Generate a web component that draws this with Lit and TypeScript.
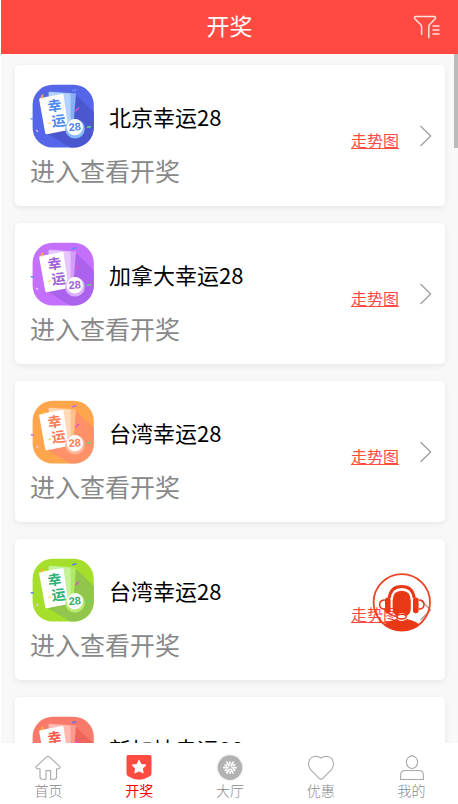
import { LitElement, html, css, svg } from "lit";
import { customElement, property } from "lit/decorators.js";

interface Palette {
  base: string;
  shade: string;
  sheet: string;
  back: string;
  ink: string;
  ring: string;
  spark: string;
}

interface Lottery {
  name: string;
  palette: Palette;
}

const LOTTERIES: Lottery[] = [
  { name: "北京幸运28", palette: { base: "#5566e8", shade: "#4b57cf", sheet: "#b4d2ff", back: "#86aefa", ink: "#4a88f2", ring: "#86b9fb", spark: "#6a8cf5" } },
  { name: "加拿大幸运28", palette: { base: "#c56fff", shade: "#ab63ee", sheet: "#e6c6ff", back: "#d79bff", ink: "#a05fd6", ring: "#dcb2ff", spark: "#4f8df5" } },
  { name: "台湾幸运28", palette: { base: "#ffa64c", shade: "#ff9169", sheet: "#ffd9b8", back: "#ffc08c", ink: "#fb7d58", ring: "#ffb795", spark: "#c06cf0" } },
  { name: "台湾幸运28", palette: { base: "#a6df2b", shade: "#90c64b", sheet: "#c3f29a", back: "#b0ea62", ink: "#2bb277", ring: "#b9ea70", spark: "#5b7bf0" } },
  { name: "新加坡幸运28", palette: { base: "#f97a6b", shade: "#ee665b", sheet: "#ffb9b0", back: "#fd998e", ink: "#f9584a", ring: "#ffa59b", spark: "#6a6cf0" } },
];

@customElement("lottery-badge")
export class LotteryBadge extends LitElement {
  @property({ attribute: false }) palette!: Palette;

  static styles = css`
    :host { display: block; flex: none; }
    .art { display: block; width: 68px; height: 68px; }
    .glyph { font-family: "Noto Sans CJK SC", sans-serif; font-weight: 700; font-size: 14px; text-anchor: middle; }
    .number { font-family: "Liberation Sans", sans-serif; font-weight: 700; font-size: 11px; text-anchor: middle; }
  `;

  render() {
    const p = this.palette;
    return html`<svg class="art" viewBox="0 0 68 68" aria-hidden="true">
      <defs>
        <clipPath id="tile"><rect x="2.6" y="1.8" width="61.2" height="62.8" rx="20" /></clipPath>
      </defs>
      <rect x="2.6" y="1.8" width="61.2" height="62.8" rx="20" fill=${p.base} />
      <path clip-path="url(#tile)" d="M45 11 68 33V68H46L16 50Z" fill=${p.shade} />
      <path d="M20 8.6 46 10.4 43.5 42 20 40Z" fill=${p.back} />
      <path d="M18.5 9 40.5 10.4 40.8 40 20 42Z" fill=${p.sheet} />
      <path d="M10.5 15.1 31.8 10.9Q33.2 10.6 33.5 12L38.3 45.6Q38.5 47 37.1 47.3L17 51.2Q15.5 51.4 15.2 50L9.2 16.8Q9 15.4 10.5 15.1Z" fill="#fff" />
      <text class="glyph" x="24.5" y="28" fill=${p.ink} transform="rotate(-7 24.5 23)">幸</text>
      <text class="glyph" x="28.5" y="43" fill=${p.ink} transform="rotate(-7 28.5 38)">运</text>
      <circle cx="45" cy="45.8" r="9.8" fill=${p.ring} />
      <circle cx="44.8" cy="44.2" r="8.2" fill="#fff" />
      <text class="number" x="44.8" y="47.8" fill=${p.ink} transform="rotate(-5 44.8 44)">28</text>
      <path d="M11.2 15.4 12.8 11.6" stroke="#ffb22e" stroke-width="1.8" />
      <path d="M42 7.8 46.6 6.8" stroke=${p.spark} stroke-width="1.4" />
      <path d="M45.4 28.2 49 24.8" stroke="#e257c8" stroke-width="1.4" />
      <path d="M57 44.2 60.8 43.6" stroke="#62d77c" stroke-width="1.6" />
      <path d="M.8 35.8 3.6 36" stroke=${p.spark} stroke-width="1.4" />
      <path d="M6 47 8.2 48.8" stroke="#f1c3f3" stroke-width="1.2" />
      <path d="M18.4 40.6 21 39.8" stroke="#ffd24a" stroke-width="1.2" />
    </svg>`;
  }
}

@customElement("lottery-card")
export class LotteryCard extends LitElement {
  @property({ attribute: false }) lottery!: Lottery;

  static styles = css`
    :host { display: block; }
    .card { display: flex; align-items: center; padding: 18px 12px 17px 15px; background: #fff; border-radius: 5px; box-shadow: 0 2px 6px rgba(0, 0, 0, 0.07); }
    .info { flex: 1; min-width: 0; }
    .head { display: flex; align-items: center; gap: 11px; }
    .name { margin: 0; padding-bottom: 2px; font-size: 22px; line-height: 32px; font-weight: 400; color: #000; white-space: nowrap; }
    .hint { margin: 0; font-size: 25px; line-height: 38px; color: #888; white-space: nowrap; }
    .trend { margin-top: 8px; margin-right: 20px; font-size: 16px; line-height: 24px; color: #ff4a42; text-decoration: underline; white-space: nowrap; }
    .open { display: block; padding: 0; border: 0; background: none; cursor: pointer; }
    .arrow { display: block; width: 14px; height: 24px; }
  `;

  render() {
    return html`<article class="card">
      <div class="info">
        <div class="head">
          <lottery-badge .palette=${this.lottery.palette}></lottery-badge>
          <h2 class="name">${this.lottery.name}</h2>
        </div>
        <p class="hint">进入查看开奖</p>
      </div>
      <a class="trend" href="#trend">走势图</a>
      <button class="open" type="button" aria-label=${this.lottery.name}>
        <svg class="arrow" viewBox="0 0 14 24" fill="none" stroke="#a2a2a2" stroke-width="1.4"><path d="M1.5 2 11.6 12 1.5 22" /></svg>
      </button>
    </article>`;
  }
}

const HOME = svg`<path d="M5 13.8H2.2Q.2 12.8 1.6 11.2L11.6 1.8Q13 .6 14.4 1.8L24.4 11.2Q25.8 12.8 23.8 13.8H21.6V22Q21.6 24.2 19.4 24.2H15.6V15.6H11V24.2H7.2Q5 24.2 5 22Z" />`;
const DRAW = svg`<path d="M2 0H24Q25.5 0 25.5 1.6V18.5Q25.5 20.5 23.4 21.6 18.5 24.8 13 24.8T2.6 21.6Q.5 20.5.5 18.5V1.6Q.5 0 2 0Z" fill="#ff4a42" stroke="none" /><path d="M13 5.4 15 9.5 19.6 10.1 16.3 13.3 17.1 17.8 13 15.7 8.9 17.8 9.7 13.3 6.4 10.1 11 9.5Z" fill="#fff" stroke="#fff" stroke-linejoin="round" />`;
const HALL = svg`<circle cx="13" cy="12.6" r="13.8" fill="#f5f5f5" stroke="none" /><circle cx="13" cy="12.6" r="12.3" fill="#b2b2b2" stroke="none" />
  <g stroke="#fff" stroke-width="1.7" stroke-linecap="round">
    ${[30, 90, 150, 210, 270, 330].map((a) => svg`<g transform="rotate(${a} 13 12.6)"><path d="M13 10.6V6.4M15.6 7.8 14.9 9" /></g>`)}
  </g>`;
const HEART = svg`<path d="M13 24.1Q11.6 24 10.4 22.6L2.8 14.8Q.3 12 .6 8.4 1.2 1.6 7.6 1.2 11 1.2 13 3.2 15 1.2 18.4 1.2 24.8 1.6 25.4 8.4 25.7 12 23.2 14.8L15.6 22.6Q14.4 24 13 24.1Z" />`;
const MINE = svg`<ellipse cx="13" cy="7.2" rx="5.6" ry="6.3" /><path d="M1.6 24.5V20.4Q1.6 15.5 6.4 15.5H19.6Q24.4 15.5 24.4 20.4V24.5Z" />`;

const TABS = [
  { label: "首页", icon: HOME, active: false },
  { label: "开奖", icon: DRAW, active: true },
  { label: "大厅", icon: HALL, active: false },
  { label: "优惠", icon: HEART, active: false },
  { label: "我的", icon: MINE, active: false },
];

@customElement("app-root")
export class AppRoot extends LitElement {
  static styles = css`
    :host { display: flex; flex-direction: column; position: relative; height: 100vh; overflow: hidden; box-sizing: border-box; background: #fff; font-family: "Noto Sans CJK SC", "Noto Sans", sans-serif; }
    .bar { flex: none; display: grid; grid-template-columns: 1fr auto 1fr; align-items: center; height: 54px; margin-left: 1px; padding: 0 18px; background: #ff4a42; color: #fff; }
    .title { grid-column: 2; margin: 0; padding-bottom: 4px; font-size: 23px; line-height: 32px; font-weight: 400; }
    .filter { justify-self: end; padding: 0; border: 0; background: none; cursor: pointer; }
    .filter-icon { display: block; width: 27px; height: 27px; }
    .body { flex: 1; min-height: 0; position: relative; display: flex; margin-left: 1px; background: #f8f8f8; }
    .list { flex: 1; display: flex; flex-direction: column; gap: 17px; padding: 11px 13px 11px 14px; overflow-y: auto; scrollbar-width: none; }
    .list > * { flex: none; }
    .thumb { position: absolute; top: 0; right: 0; width: 4px; height: 94px; background: #bbb; }
    .service { position: absolute; right: 26px; bottom: 111px; padding: 0; border: 0; background: none; cursor: pointer; }
    .service-icon { display: block; width: 60px; height: 60px; }
    .tabs { flex: none; display: flex; padding: 12px 1px 4px 3px; background: #fff; }
    .tab { flex: 1; display: flex; flex-direction: column; align-items: center; color: #888; font-size: 14px; line-height: 19px; font-weight: 300; text-decoration: none; }
    .tab.active { color: #f00; font-weight: 400; }
    .tab-icon { display: block; width: 26px; height: 26px; overflow: visible; }
  `;

  render() {
    return html`
      <header class="bar">
        <h1 class="title">开奖</h1>
        <button class="filter" type="button" aria-label="筛选">
          <svg class="filter-icon" viewBox="0 0 27 27" fill="none" stroke="#fff" stroke-opacity=".85" stroke-width="1.5" stroke-linecap="round">
            <path d="M8.6 20.5V13Q8.6 11.5 7.6 10.5L2 5Q.4 2.6 3 2.5H21Q23.6 2.6 22 5L16.6 10.5Q15.8 11.4 15.8 13V23.8" />
            <path d="M20 12H26M20 16H26M20 20H26" />
          </svg>
        </button>
      </header>
      <main class="body">
        <div class="list">
          ${LOTTERIES.map((l) => html`<lottery-card .lottery=${l}></lottery-card>`)}
        </div>
        <div class="thumb"></div>
        <button class="service" type="button" aria-label="客服">
          <svg class="service-icon" viewBox="0 0 60 60" fill="none">
            <defs><clipPath id="round"><circle cx="29.8" cy="30.3" r="28.5" /></clipPath></defs>
            <circle cx="29.8" cy="30.3" r="28.2" stroke="#ec4426" stroke-width="1.8" />
            <path clip-path="url(#round)" d="M10 56Q12 50.5 20 48.4L24.5 47Q29.7 51 35 47L40 48.4Q47 50.5 50 56V60H10Z" fill="#e93815" />
            <path d="M20.6 29Q20.6 18.8 29.7 18.8T38.8 29V36Q38.8 41.6 34.8 44L33 42Q29.7 40 26.4 42L24.6 44Q20.6 41.6 20.6 36Z" fill="#e93815" />
            <path d="M17.2 26Q18.6 14.4 29.7 14.4T42.2 26" stroke="#e93815" stroke-width="3" />
            <rect x="13" y="25.6" width="5.6" height="15.6" rx="2.6" fill="#e93815" />
            <rect x="41" y="25.6" width="5.6" height="15.6" rx="2.6" fill="#e93815" />
            <path d="M13 28Q7.6 28 7.6 32.6T13 37.2M46.6 28Q52 28 52 32.6T46.6 37.2" stroke="#e93815" stroke-width="1.5" />
            <path d="M16 40.5Q18.5 44 24.5 44.6" stroke="#e93815" stroke-width="1.2" />
            <ellipse cx="29.7" cy="44.6" rx="4.6" ry="2.4" stroke="#e93815" stroke-width="1.4" />
          </svg>
        </button>
      </main>
      <nav class="tabs">
        ${TABS.map(
          (t) => html`<a class="tab ${t.active ? "active" : ""}" href="#tab">
            <svg class="tab-icon" viewBox="0 0 26 26" fill="none" stroke="#a8a8a8" stroke-width="1.1" stroke-linejoin="round">${t.icon}</svg>
            <span>${t.label}</span>
          </a>`,
        )}
      </nav>
    `;
  }
}
